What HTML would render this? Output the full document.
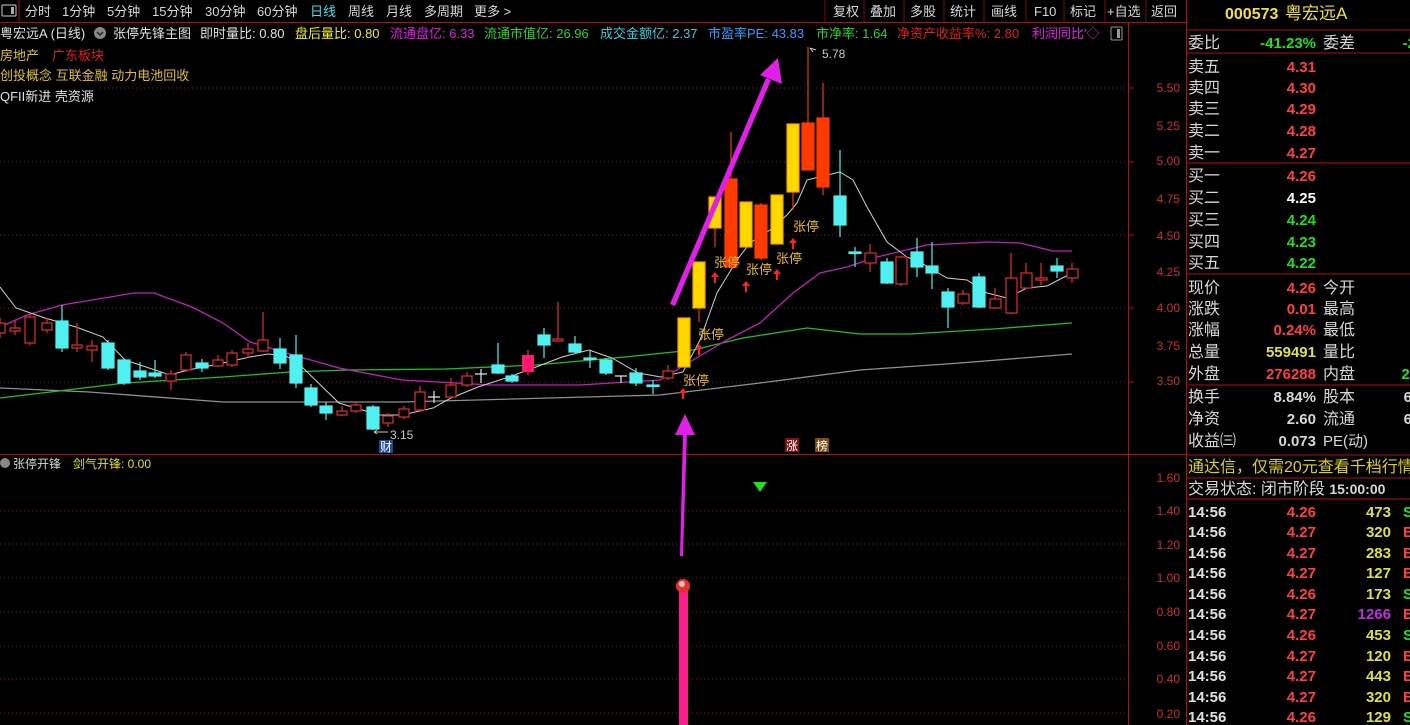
<!DOCTYPE html>
<html><head><meta charset="utf-8"><style>
html,body{margin:0;padding:0;background:#000;width:1410px;height:725px;overflow:hidden}
svg{display:block}
text{font-family:"Liberation Sans","Noto Sans CJK SC",sans-serif}
</style></head><body>
<svg width="1410" height="725" viewBox="0 0 1410 725" xmlns="http://www.w3.org/2000/svg">
<rect width="1410" height="725" fill="#000"/>
<!-- toolbar -->
<g font-size="13" fill="#d8d8d8">
<rect x="2" y="5" width="14" height="11" fill="none" stroke="#aaa" stroke-width="1.2" rx="1"/><rect x="11" y="7" width="3" height="7" fill="#aaa"/>
<line x1="19" y1="0" x2="19" y2="22" stroke="#a01010"/>
<text x="25" y="16">分时</text><text x="62" y="16">1分钟</text><text x="107" y="16">5分钟</text><text x="152" y="16">15分钟</text><text x="205" y="16">30分钟</text><text x="257" y="16">60分钟</text>
<text x="310" y="16" fill="#40e0f0">日线</text><text x="348" y="16">周线</text><text x="386" y="16">月线</text><text x="424" y="16">多周期</text><text x="474" y="16">更多 &gt;</text>
<text x="833" y="16">复权</text><text x="870" y="16">叠加</text><text x="910" y="16">多股</text><text x="950" y="16">统计</text><text x="991" y="16">画线</text><text x="1034" y="16">F10</text><text x="1070" y="16">标记</text><text x="1107" y="16">+自选</text><text x="1151" y="16">返回</text>
</g>
<g stroke="#701010"><line x1="825" y1="0" x2="825" y2="22"/><line x1="864" y1="0" x2="864" y2="22"/><line x1="904" y1="0" x2="904" y2="22"/><line x1="944" y1="0" x2="944" y2="22"/><line x1="984" y1="0" x2="984" y2="22"/><line x1="1026" y1="0" x2="1026" y2="22"/><line x1="1064" y1="0" x2="1064" y2="22"/><line x1="1105" y1="0" x2="1105" y2="22"/><line x1="1146" y1="0" x2="1146" y2="22"/></g>
<line x1="0" y1="22.5" x2="1187" y2="22.5" stroke="#b01010"/>
<!-- frame lines -->
<line x1="1128.5" y1="23" x2="1128.5" y2="725" stroke="#b01010"/>
<line x1="1186.5" y1="0" x2="1186.5" y2="725" stroke="#b01010"/>
<line x1="0" y1="454.5" x2="1187" y2="454.5" stroke="#b01010"/>
<!-- grid -->
<g stroke="#801818" stroke-dasharray="1,3">
<line x1="100" y1="88" x2="1128" y2="88"/><line x1="0" y1="162" x2="1128" y2="162"/><line x1="0" y1="235" x2="1128" y2="235"/><line x1="0" y1="308" x2="1128" y2="308"/><line x1="0" y1="382" x2="1128" y2="382"/>
<line x1="0" y1="511" x2="1128" y2="511"/><line x1="0" y1="544" x2="1128" y2="544"/><line x1="0" y1="578" x2="1128" y2="578"/><line x1="0" y1="612" x2="1128" y2="612"/><line x1="0" y1="646" x2="1128" y2="646"/><line x1="0" y1="679" x2="1128" y2="679"/><line x1="0" y1="713" x2="1128" y2="713"/>
</g>
<!-- axis labels -->
<g font-size="12" fill="#c83030" text-anchor="end">
<g stroke="#b01010"><line x1="1128" y1="88" x2="1134" y2="88"/><line x1="1128" y1="162" x2="1134" y2="162"/><line x1="1128" y1="235" x2="1134" y2="235"/><line x1="1128" y1="308" x2="1134" y2="308"/><line x1="1128" y1="382" x2="1134" y2="382"/></g>
<text x="1180" y="92">5.50</text><text x="1180" y="130">5.25</text><text x="1180" y="165">5.00</text><text x="1180" y="203">4.75</text><text x="1180" y="240">4.50</text><text x="1180" y="276">4.25</text><text x="1180" y="312">4.00</text><text x="1180" y="350">3.75</text><text x="1180" y="385">3.50</text>
<text x="1180" y="482">1.60</text><text x="1180" y="515">1.40</text><text x="1180" y="549">1.20</text><text x="1180" y="582">1.00</text><text x="1180" y="616">0.80</text><text x="1180" y="650">0.60</text><text x="1180" y="683">0.40</text><text x="1180" y="718">0.20</text>
</g>
<!-- header -->
<g font-size="13">
<text x="0" y="38" fill="#e0e0e0">粤宏远A (日线)</text>
<circle cx="100" cy="33" r="6" fill="#888"/><path d="M97 32 L100 35 L103 32" stroke="#222" fill="none" stroke-width="1.5"/>
<text x="113" y="38" fill="#e0e0e0">张停先锋主图</text>
<text x="200" y="38" fill="#e0e0e0">即时量比: 0.80</text>
<text x="295" y="38" fill="#f0f020">盘后量比: 0.80</text>
<text x="390" y="38" fill="#e020e0">流通盘亿: 6.33</text>
<text x="484" y="38" fill="#30d030">流通市值亿: 26.96</text>
<text x="600" y="38" fill="#30d0e0">成交金额亿: 2.37</text>
<text x="708" y="38" fill="#3a9cff">市盈率PE: 43.83</text>
<text x="816" y="38" fill="#30d030">市净率: 1.64</text>
<text x="897" y="38" fill="#e02020">净资产收益率%: 2.80</text>
<text x="1032" y="38" fill="#e020e0">利润同比'◇</text>
<rect x="1111" y="27" width="11" height="13" fill="none" stroke="#999" rx="1"/><rect x="1117" y="29" width="3" height="9" fill="#999"/>
<text x="0" y="60" fill="#e0c030">房地产</text><text x="52" y="60" fill="#e02020">广东板块</text>
<text x="0" y="80" fill="#e0c030">创投概念 互联金融 动力电池回收</text>
<text x="0" y="101" fill="#e0e0e0">QFII新进 壳资源</text>
</g>
<!-- MA lines -->
<g fill="none" stroke-width="1.3">
<polyline stroke="#909090" points="0,388 89,392 223,402 402,402 660,395 760,383 860,370 960,363 1072,354"/>
<polyline stroke="#20c020" points="0,398 67,390 125,383 223,377 290,372 348,370 446,369 536,365 625,357 693,350 743,338 807,328 860,334 910,334 993,329 1072,323"/>
<polyline stroke="#c020c0" points="0,327 27,315 62,305 134,293 154,293 192,307 223,323 250,342 286,353 339,368 402,380 491,385 580,385 660,380 693,360 727,340 760,323 793,293 820,273 847,267 877,257 927,245 987,242 1020,243 1053,251 1072,251"/>
<polyline stroke="#d0d0d0" stroke-width="1" points="0,287 16,308 45,318 76,327 103,337 125,360 170,375 188,370 214,365 250,357 268,354 286,356 300,365 339,403 379,415 402,415 433,408 451,398 478,387 509,377 536,367 562,357 589,350 612,358 638,373 661,377 683,372 700,340 717,293 737,260 750,243 770,230 787,215 797,203 807,180 823,176 840,172 853,180 867,207 887,242 907,257 923,264 947,278 967,280 987,293 1007,298 1027,288 1047,286 1072,273"/>
</g>
<!-- candles -->
<g stroke-width="1.2">
<g stroke="#e03030" fill="#000">
<line x1="0" y1="318" x2="0" y2="338"/><rect x="-5" y="323" width="10" height="10"/>
<line x1="15" y1="320" x2="15" y2="335"/><rect x="10" y="328" width="10" height="3"/>
<line x1="30" y1="313" x2="30" y2="345"/><rect x="25" y="317" width="10" height="26"/>
<line x1="47" y1="318" x2="47" y2="333"/><rect x="42" y="323" width="10" height="7"/>
<line x1="77" y1="323" x2="77" y2="352"/><rect x="72" y="345" width="10" height="3"/>
<line x1="92" y1="340" x2="92" y2="362"/><rect x="87" y="346" width="10" height="4"/>
<line x1="171" y1="370" x2="171" y2="390"/><rect x="166" y="374" width="10" height="7"/>
<line x1="186" y1="352" x2="186" y2="372"/><rect x="181" y="355" width="10" height="15"/>
<line x1="218" y1="355" x2="218" y2="367"/><rect x="213" y="360" width="10" height="6"/>
<line x1="232" y1="350" x2="232" y2="367"/><rect x="227" y="353" width="10" height="12"/>
<line x1="248" y1="343" x2="248" y2="358"/><rect x="243" y="349" width="10" height="4"/>
<line x1="263" y1="312" x2="263" y2="352"/><rect x="258" y="340" width="10" height="11"/>
<line x1="342" y1="406" x2="342" y2="416"/><rect x="337" y="411" width="10" height="4"/>
<line x1="356" y1="402" x2="356" y2="413"/><rect x="351" y="405" width="10" height="6"/>
<line x1="388" y1="413" x2="388" y2="427"/><rect x="383" y="416" width="10" height="7"/>
<line x1="404" y1="406" x2="404" y2="419"/><rect x="399" y="409" width="10" height="8"/>
<line x1="420" y1="386" x2="420" y2="412"/><rect x="415" y="392" width="10" height="18"/>
<line x1="451" y1="378" x2="451" y2="399"/><rect x="446" y="385" width="10" height="12"/>
<line x1="467" y1="372" x2="467" y2="387"/><rect x="462" y="376" width="10" height="9"/>
<line x1="558" y1="302" x2="558" y2="342"/><rect x="553" y="339" width="10" height="2"/>
<line x1="668" y1="365" x2="668" y2="380"/><rect x="663" y="371" width="10" height="7"/>
<line x1="870" y1="244" x2="870" y2="272"/><rect x="865" y="253" width="11" height="10"/>
<line x1="901" y1="256" x2="901" y2="286"/><rect x="896" y="257" width="11" height="27"/>
<line x1="963" y1="290" x2="963" y2="305"/><rect x="958" y="294" width="11" height="9"/>
<line x1="995" y1="288" x2="995" y2="309"/><rect x="990" y="299" width="11" height="9"/>
<line x1="1011" y1="253" x2="1011" y2="314"/><rect x="1006" y="278" width="11" height="35"/>
<line x1="1026" y1="263" x2="1026" y2="289"/><rect x="1021" y="273" width="11" height="15"/>
<line x1="1041" y1="263" x2="1041" y2="285"/><rect x="1036" y="278" width="11" height="2"/>
<line x1="1072" y1="263" x2="1072" y2="283"/><rect x="1067" y="269" width="11" height="9"/>
</g>
<g stroke="#50f0f0" fill="#50f0f0">
<line x1="62" y1="305" x2="62" y2="352"/><rect x="56" y="321" width="12" height="27"/>
<line x1="108" y1="340" x2="108" y2="370"/><rect x="102" y="343" width="12" height="25"/>
<line x1="124" y1="358" x2="124" y2="385"/><rect x="118" y="360" width="12" height="23"/>
<line x1="140" y1="362" x2="140" y2="380"/><rect x="134" y="371" width="12" height="6"/>
<line x1="155" y1="360" x2="155" y2="378"/><rect x="149" y="373" width="12" height="3"/>
<line x1="202" y1="359" x2="202" y2="372"/><rect x="196" y="363" width="12" height="5"/>
<line x1="280" y1="338" x2="280" y2="369"/><rect x="274" y="349" width="12" height="14"/>
<line x1="296" y1="335" x2="296" y2="388"/><rect x="290" y="355" width="12" height="28"/>
<line x1="311" y1="384" x2="311" y2="407"/><rect x="305" y="388" width="12" height="17"/>
<line x1="326" y1="402" x2="326" y2="420"/><rect x="320" y="406" width="12" height="7"/>
<line x1="373" y1="405" x2="373" y2="430"/><rect x="367" y="407" width="12" height="22"/>
<line x1="498" y1="343" x2="498" y2="374"/><rect x="492" y="365" width="12" height="8"/>
<line x1="512" y1="374" x2="512" y2="383"/><rect x="506" y="376" width="12" height="5"/>
<line x1="544" y1="328" x2="544" y2="358"/><rect x="538" y="335" width="12" height="10"/>
<line x1="575" y1="336" x2="575" y2="353"/><rect x="569" y="344" width="12" height="8"/>
<line x1="590" y1="351" x2="590" y2="368"/><rect x="584" y="358" width="12" height="1.5"/>
<line x1="606" y1="358" x2="606" y2="375"/><rect x="600" y="360" width="12" height="13"/>
<line x1="636" y1="368" x2="636" y2="386"/><rect x="630" y="373" width="12" height="10"/>
<line x1="653" y1="380" x2="653" y2="394"/><rect x="647" y="385" width="12" height="1.5"/>
<line x1="840" y1="150" x2="840" y2="237"/><rect x="834" y="196" width="12" height="29"/>
<line x1="855" y1="247" x2="855" y2="267"/><rect x="849" y="252" width="12" height="1.5"/>
<line x1="887" y1="258" x2="887" y2="284"/><rect x="881" y="262" width="12" height="21"/>
<line x1="917" y1="238" x2="917" y2="277"/><rect x="911" y="252" width="12" height="15"/>
<line x1="932" y1="242" x2="932" y2="289"/><rect x="926" y="266" width="12" height="7"/>
<line x1="948" y1="288" x2="948" y2="328"/><rect x="942" y="292" width="12" height="15"/>
<line x1="979" y1="273" x2="979" y2="308"/><rect x="973" y="277" width="12" height="30"/>
<line x1="1057" y1="258" x2="1057" y2="278"/><rect x="1051" y="266" width="12" height="5"/>
</g>
<g stroke="#e8e8e8"><line x1="434" y1="391" x2="434" y2="403"/><line x1="428" y1="397" x2="440" y2="397"/><line x1="481" y1="369" x2="481" y2="383"/><line x1="475" y1="374" x2="487" y2="374"/><line x1="621" y1="376" x2="621" y2="383"/><line x1="615" y1="376" x2="627" y2="376"/></g>
<line x1="528" y1="350" x2="528" y2="375" stroke="#ff1a70"/><rect x="522" y="355" width="12" height="17" fill="#ff1a70"/>
<g stroke="#e04010">
<line x1="699" y1="308" x2="699" y2="322"/><line x1="715" y1="228" x2="715" y2="247"/><line x1="731" y1="132" x2="731" y2="268"/><line x1="761" y1="203" x2="761" y2="260"/><line x1="793" y1="192" x2="793" y2="210"/><line x1="808" y1="47" x2="808" y2="170"/><line x1="823" y1="83" x2="823" y2="195"/>
</g>
<g fill="#ffd800" stroke="#ff9a00">
<rect x="678" y="318" width="12" height="49"/><rect x="693" y="262" width="12" height="46"/><rect x="709" y="197" width="12" height="31"/><rect x="740" y="202" width="12" height="45"/><rect x="771" y="195" width="12" height="49"/><rect x="787" y="124" width="12" height="68"/>
</g>
<g fill="#ff3a00" stroke="#ff3a00">
<rect x="725" y="179" width="12" height="88"/><rect x="755" y="205" width="12" height="53"/><rect x="802" y="123" width="12" height="47"/><rect x="817" y="118" width="12" height="69"/>
</g>
</g>
<!-- 涨停 labels and red arrows -->
<g font-size="13" fill="#e8b830">
<text x="683" y="385">张停</text><text x="698" y="339">张停</text><text x="714" y="267">张停</text><text x="746" y="274">张停</text><text x="776" y="263">张停</text><text x="793" y="231">张停</text>
</g>
<g fill="#ff2020">
<path d="M683 388 l-4 5 h3 v6 h2 v-6 h3z"/><path d="M699 344 l-4 5 h3 v6 h2 v-6 h3z"/><path d="M715 272 l-4 5 h3 v6 h2 v-6 h3z"/><path d="M746 281 l-4 5 h3 v6 h2 v-6 h3z"/><path d="M777 269 l-4 5 h3 v6 h2 v-6 h3z"/><path d="M793 238 l-4 5 h3 v6 h2 v-6 h3z"/>
</g>
<!-- price labels -->
<g font-size="12" fill="#c8c8c8">
<path d="M810 48 l6 2 M810 48 l3 4" stroke="#c8c8c8" fill="none"/><text x="822" y="58">5.78</text>
<path d="M374 432 h14 M374 432 l3 -2 M374 432 l3 2" stroke="#c8c8c8" fill="none"/><text x="390" y="439">3.15</text>
</g>
<rect x="379" y="440" width="14" height="13" fill="#1d4a9a"/><text x="380" y="451" font-size="12" fill="#fff">财</text>
<rect x="785" y="438" width="14" height="14" fill="#7a1010"/><text x="786" y="450" font-size="12" fill="#fff">涨</text>
<rect x="815" y="438" width="14" height="14" fill="#7a4a10"/><text x="816" y="450" font-size="12" fill="#fff">榜</text>
<!-- magenta arrows -->
<g fill="#e020e8">
<polygon points="670,304 675,306 771,80 766,78"/>
<polygon points="778,58 760,75 782,84"/>
<polygon points="680,556 683,556 687,432 683,432"/>
<polygon points="685,414 675,435 695,435"/>
</g>
<!-- lower pane -->
<g font-size="12">
<circle cx="5" cy="463" r="5" fill="#888"/><text x="13" y="468" fill="#d8d8d8">张停开锋</text><text x="73" y="468" fill="#e0e020">剑气开锋: 0.00</text>
</g>
<polygon points="753,482 767,482 760,492" fill="#20e020"/>
<rect x="679" y="588" width="9" height="137" fill="#ff1c8c"/>
<circle cx="683" cy="586" r="7" fill="#e83030"/><circle cx="682" cy="584" r="3" fill="#ffc0c0"/>
<!-- right panel -->
<text x="1225" y="19" font-size="16" fill="#f0e040" font-weight="bold">000573</text><text x="1285" y="19" font-size="17" fill="#f0e040">粤宏远A</text>
<g stroke="#b01010"><line x1="1187" y1="30" x2="1410" y2="30"/><line x1="1187" y1="53" x2="1410" y2="53"/><line x1="1187" y1="163" x2="1410" y2="163"/><line x1="1187" y1="274" x2="1410" y2="274"/><line x1="1187" y1="385" x2="1410" y2="385"/><line x1="1187" y1="455" x2="1410" y2="455"/><line x1="1187" y1="478" x2="1410" y2="478"/><line x1="1187" y1="499" x2="1410" y2="499"/></g>
<g font-size="16" fill="#d8d8d8">
<text x="1188" y="48">委比</text><text x="1323" y="48">委差</text>
<text x="1188" y="72">卖五</text><text x="1188" y="93">卖四</text><text x="1188" y="114">卖三</text><text x="1188" y="136">卖二</text><text x="1188" y="158">卖一</text>
<text x="1188" y="181">买一</text><text x="1188" y="203">买二</text><text x="1188" y="225">买三</text><text x="1188" y="247">买四</text><text x="1188" y="268">买五</text>
<text x="1188" y="293">现价</text><text x="1188" y="314">涨跌</text><text x="1188" y="335">涨幅</text><text x="1188" y="357">总量</text><text x="1188" y="379">外盘</text>
<text x="1323" y="293">今开</text><text x="1323" y="314">最高</text><text x="1323" y="335">最低</text><text x="1323" y="357">量比</text><text x="1323" y="379">内盘</text>
<text x="1188" y="402">换手</text><text x="1188" y="424">净资</text><text x="1188" y="446">收益㈢</text>
<text x="1323" y="402">股本</text><text x="1323" y="424">流通</text><text x="1323" y="446" font-size="15">PE(动)</text>
<text x="1188" y="472" fill="#e0d020">通达信，仅需20元查看千档行情</text>
<text x="1188" y="494">交易状态: 闭市阶段 <tspan font-weight="bold" font-size="14">15:00:00</tspan></text>
</g>
<g font-size="15" font-weight="bold" text-anchor="end">
<text x="1316" y="48" fill="#20e020">-41.23%</text><text x="1416" y="48" fill="#20e020">-2</text>
<text x="1316" y="72" fill="#ff4040">4.31</text><text x="1316" y="93" fill="#ff4040">4.30</text><text x="1316" y="114" fill="#ff4040">4.29</text><text x="1316" y="136" fill="#ff4040">4.28</text><text x="1316" y="158" fill="#ff4040">4.27</text>
<text x="1316" y="181" fill="#ff4040">4.26</text><text x="1316" y="203" fill="#ffffff">4.25</text><text x="1316" y="225" fill="#20e020">4.24</text><text x="1316" y="247" fill="#20e020">4.23</text><text x="1316" y="268" fill="#20e020">4.22</text>
<text x="1316" y="293" fill="#ff4040">4.26</text><text x="1316" y="314" fill="#ff4040">0.01</text><text x="1316" y="335" fill="#ff4040">0.24%</text><text x="1316" y="357" fill="#e0e040">559491</text><text x="1316" y="379" fill="#ff4040">276288</text><text x="1418" y="379" fill="#20e020">20</text>
<text x="1316" y="402" fill="#d8d8d8">8.84%</text><text x="1316" y="424" fill="#d8d8d8">2.60</text><text x="1316" y="446" fill="#d8d8d8">0.073</text>
<text x="1412" y="402" fill="#d8d8d8">6</text><text x="1412" y="424" fill="#d8d8d8">6</text>
</g>
<g font-size="15" font-weight="bold">
<g fill="#e0e0e0"><text x="1188" y="517">14:56</text><text x="1188" y="537">14:56</text><text x="1188" y="558">14:56</text><text x="1188" y="578">14:56</text><text x="1188" y="599">14:56</text><text x="1188" y="619">14:56</text><text x="1188" y="640">14:56</text><text x="1188" y="661">14:56</text><text x="1188" y="681">14:56</text><text x="1188" y="702">14:56</text><text x="1188" y="722">14:56</text></g>
<g fill="#ff4040" text-anchor="end"><text x="1316" y="517">4.26</text><text x="1316" y="537">4.27</text><text x="1316" y="558">4.27</text><text x="1316" y="578">4.27</text><text x="1316" y="599">4.26</text><text x="1316" y="619">4.27</text><text x="1316" y="640">4.26</text><text x="1316" y="661">4.27</text><text x="1316" y="681">4.27</text><text x="1316" y="702">4.27</text><text x="1316" y="722">4.26</text></g>
<g fill="#e0e040" text-anchor="end"><text x="1391" y="517">473</text><text x="1391" y="537">320</text><text x="1391" y="558">283</text><text x="1391" y="578">127</text><text x="1391" y="599">173</text><text x="1391" y="619" fill="#c030e0">1266</text><text x="1391" y="640">453</text><text x="1391" y="661">120</text><text x="1391" y="681">443</text><text x="1391" y="702">320</text><text x="1391" y="722">129</text></g>
<g><text x="1403" y="517" fill="#20e020">S</text><text x="1403" y="537" fill="#ff4040">B</text><text x="1403" y="558" fill="#ff4040">B</text><text x="1403" y="578" fill="#ff4040">B</text><text x="1403" y="599" fill="#20e020">S</text><text x="1403" y="619" fill="#ff4040">B</text><text x="1403" y="640" fill="#20e020">S</text><text x="1403" y="661" fill="#ff4040">B</text><text x="1403" y="681" fill="#ff4040">B</text><text x="1403" y="702" fill="#ff4040">B</text><text x="1403" y="722" fill="#20e020">S</text></g>
</g>
</svg>
</body></html>
